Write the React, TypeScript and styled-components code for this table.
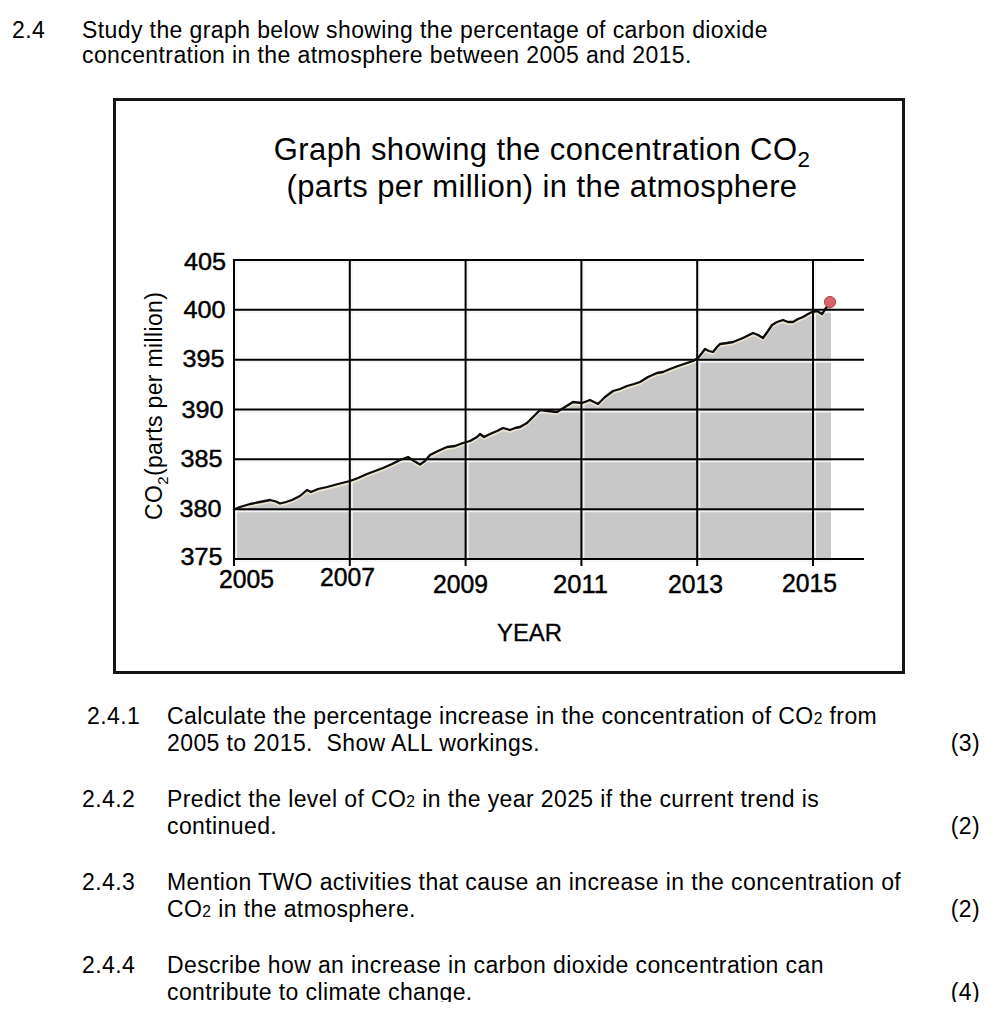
import React from "react";
import styled, { createGlobalStyle } from "styled-components";

const GlobalStyle = createGlobalStyle`
  html, body { margin: 0; padding: 0; background: #ffffff; }
  body {
    font-family: "Liberation Sans", Arial, Helvetica, sans-serif;
    color: #000;
  }
`;

const Sheet = styled.main`
  box-sizing: border-box;
  width: 996px;
  height: 1002px;
  overflow: hidden;
  padding: 17.5px 16px 0 12px;
  font-size: 23px;
  letter-spacing: 0.4px;
`;

const Intro = styled.section`
  display: grid;
  grid-template-columns: 70px 1fr;
  line-height: 25px;
`;

const Num = styled.div<{ $shift?: number }>`
  padding-left: ${(p) => p.$shift ?? 0}px;
`;

const Figure = styled.figure`
  box-sizing: border-box;
  margin: 30.5px 0 0 101px;
  width: 792px;
  height: 576px;
  border: 3px solid #161616;
  display: flex;
  flex-direction: column;
`;

const ChartTitle = styled.figcaption`
  box-sizing: border-box;
  height: 104px;
  padding: 29.75px 0 0 66px;
  font-size: 31px;
  line-height: 37px;
  letter-spacing: 0.4px;
  text-align: center;
`;

const TitleSub = styled.sub`
  font-size: 0.72em;
  line-height: 0;
  vertical-align: -0.3em;
`;

const Plot = styled.svg`
  display: block;
  width: 786px;
  height: 466px;
  font-family: "Liberation Sans", Arial, Helvetica, sans-serif;
  letter-spacing: 0;
`;

const Questions = styled.ol`
  list-style: none;
  margin: 28.5px 0 0 70px;
  padding: 0;
  display: flex;
  flex-direction: column;
  gap: 29px;
`;

const Question = styled.li`
  display: grid;
  grid-template-columns: 85px 1fr auto;
  line-height: 27px;
`;

const Marks = styled.span`
  align-self: end;
`;

const Small = styled.span`
  font-size: 0.68em;
  line-height: 0;
`;

const GRID_Y = Array.from({ length: 7 }, (_, i) => 260 + i * 49.83);
const GRID_X = Array.from({ length: 6 }, (_, i) => 234 + i * 115.8);
const LEFT = 234;
const RIGHT = 864;
const TOP = 260;
const BOTTOM = 559;

const Y_LABELS = [
  { t: "405", x: 184, y: 270 },
  { t: "400", x: 183.5, y: 318 },
  { t: "395", x: 182.5, y: 367 },
  { t: "390", x: 181.5, y: 417.5 },
  { t: "385", x: 180.5, y: 466.5 },
  { t: "380", x: 179.5, y: 516.5 },
  { t: "375", x: 180.5, y: 565 },
];

const X_LABELS = [
  { t: "2005", x: 219, y: 587.5 },
  { t: "2007", x: 320, y: 586 },
  { t: "2009", x: 433, y: 593 },
  { t: "2011", x: 553, y: 593 },
  { t: "2013", x: 668, y: 593 },
  { t: "2015", x: 782, y: 592 },
];

const CURVE: [number, number][] = [
  [234, 509.5], [240, 507], [250, 504], [260, 502], [270, 500], [276, 501.5],
  [280, 503.5], [286, 502], [292, 500], [300, 496], [307, 490], [311, 492],
  [318, 489], [327, 487], [338, 484], [350, 481], [358, 478], [367, 474],
  [375, 471], [383, 468], [392, 464], [400, 460], [408, 457], [414, 461],
  [420, 464.5], [425, 461], [430, 455], [438, 451], [447, 447], [455, 446],
  [463, 443], [470, 441], [477, 437], [480, 434], [484, 437], [490, 434],
  [497, 431], [503, 428], [510, 430], [515, 428], [520, 427], [527, 423],
  [533, 417], [540, 410], [548, 411], [557, 412], [565, 407], [573, 402],
  [582, 403], [590, 400], [598, 404], [605, 397], [613, 391], [620, 389],
  [627, 386], [634, 384], [640, 382], [648, 377], [657, 373], [663, 372],
  [670, 369], [678, 366], [687, 363], [693, 361], [698, 358], [702, 353],
  [705, 349], [709, 351], [713, 352], [717, 347], [720, 344], [727, 343],
  [733, 342], [743, 338], [753, 333], [758, 335], [763, 338], [768, 331],
  [772, 325], [777, 322], [783, 320], [788, 322], [793, 322], [798, 319],
  [803, 317], [808, 314], [812, 312], [817, 311], [822, 314], [826, 308],
  [830, 303],
];

const curvePoints = CURVE.map(([x, y]) => `${x},${y}`).join(" ");
const fillPoints = `${LEFT},${BOTTOM} ${curvePoints} 831,303 831,${BOTTOM}`;

function Chart() {
  return (
    <Plot viewBox="116 205 786 466">
      <polygon points={fillPoints} fill="#c8c8c8" />
      <polyline
        points={curvePoints}
        fill="none"
        stroke="#efe6d2"
        strokeWidth={2}
        transform="translate(0 2)"
      />
      {GRID_Y.map((y) => (
        <line key={`wy${y}`} x1={LEFT} x2={831} y1={y + 2.2} y2={y + 2.2} stroke="#f4f4f4" strokeWidth={1.6} />
      ))}
      {GRID_X.map((x) => (
        <line key={`wx${x}`} x1={x + 2.2} x2={x + 2.2} y1={TOP} y2={BOTTOM} stroke="#f4f4f4" strokeWidth={1.6} />
      ))}
      {GRID_Y.map((y) => (
        <line key={`gy${y}`} x1={LEFT} x2={RIGHT} y1={y} y2={y} stroke="#000" strokeWidth={2} />
      ))}
      {GRID_X.map((x) => (
        <line key={`gx${x}`} x1={x} x2={x} y1={TOP - 1} y2={BOTTOM + 7} stroke="#000" strokeWidth={2} />
      ))}
      <polyline
        points={curvePoints}
        fill="none"
        stroke="#0c0c0c"
        strokeWidth={2.3}
        strokeLinejoin="round"
        strokeLinecap="round"
      />
      <circle cx={830} cy={302} r={5.6} fill="#d8636b" stroke="#b4444c" strokeWidth={1} />
      {Y_LABELS.map((l) => (
        <text
          key={l.t}
          x={l.x}
          y={l.y}
          fontSize={23}
          textLength={42}
          lengthAdjust="spacingAndGlyphs"
          fill="#000"
          stroke="#000"
          strokeWidth={0.45}
        >
          {l.t}
        </text>
      ))}
      {X_LABELS.map((l) => (
        <text
          key={l.t}
          x={l.x}
          y={l.y}
          fontSize={25}
          textLength={55}
          lengthAdjust="spacingAndGlyphs"
          fill="#000"
          stroke="#000"
          strokeWidth={0.45}
        >
          {l.t}
        </text>
      ))}
      <text x={497} y={641} fontSize={24} textLength={65} lengthAdjust="spacingAndGlyphs" fill="#000" stroke="#000" strokeWidth={0.3}>
        YEAR
      </text>
      <text transform="translate(162 520) rotate(-90)" fontSize={23} fill="#000" letterSpacing={0.35}>
        CO
        <tspan fontSize={15} dy={6}>2</tspan>
        <tspan dy={-6}>(parts per million)</tspan>
      </text>
    </Plot>
  );
}

const QUESTIONS = [
  {
    n: "2.4.1",
    shift: 5,
    l1: <>Calculate the percentage increase in the concentration of CO<Small>2</Small> from</>,
    l2: <>2005 to 2015.&nbsp; Show ALL workings.</>,
    m: "(3)",
  },
  {
    n: "2.4.2",
    shift: 0,
    l1: <>Predict the level of CO<Small>2</Small> in the year 2025 if the current trend is</>,
    l2: <>continued.</>,
    m: "(2)",
  },
  {
    n: "2.4.3",
    shift: 0,
    l1: <>Mention TWO activities that cause an increase in the concentration of</>,
    l2: <>CO<Small>2</Small> in the atmosphere.</>,
    m: "(2)",
  },
  {
    n: "2.4.4",
    shift: 0,
    l1: <>Describe how an increase in carbon dioxide concentration can</>,
    l2: <>contribute to climate change.</>,
    m: "(4)",
  },
];

export default function App() {
  return (
    <>
      <GlobalStyle />
      <Sheet>
        <Intro>
          <Num>2.4</Num>
          <div>
            Study the graph below showing the percentage of carbon dioxide
            <br />
            concentration in the atmosphere between 2005 and 2015.
          </div>
        </Intro>
        <Figure>
          <ChartTitle>
            Graph showing the concentration CO<TitleSub>2</TitleSub>
            <br />
            (parts per million) in the atmosphere
          </ChartTitle>
          <Chart />
        </Figure>
        <Questions>
          {QUESTIONS.map((q) => (
            <Question key={q.n}>
              <Num $shift={q.shift}>{q.n}</Num>
              <div>
                {q.l1}
                <br />
                {q.l2}
              </div>
              <Marks>{q.m}</Marks>
            </Question>
          ))}
        </Questions>
      </Sheet>
    </>
  );
}
